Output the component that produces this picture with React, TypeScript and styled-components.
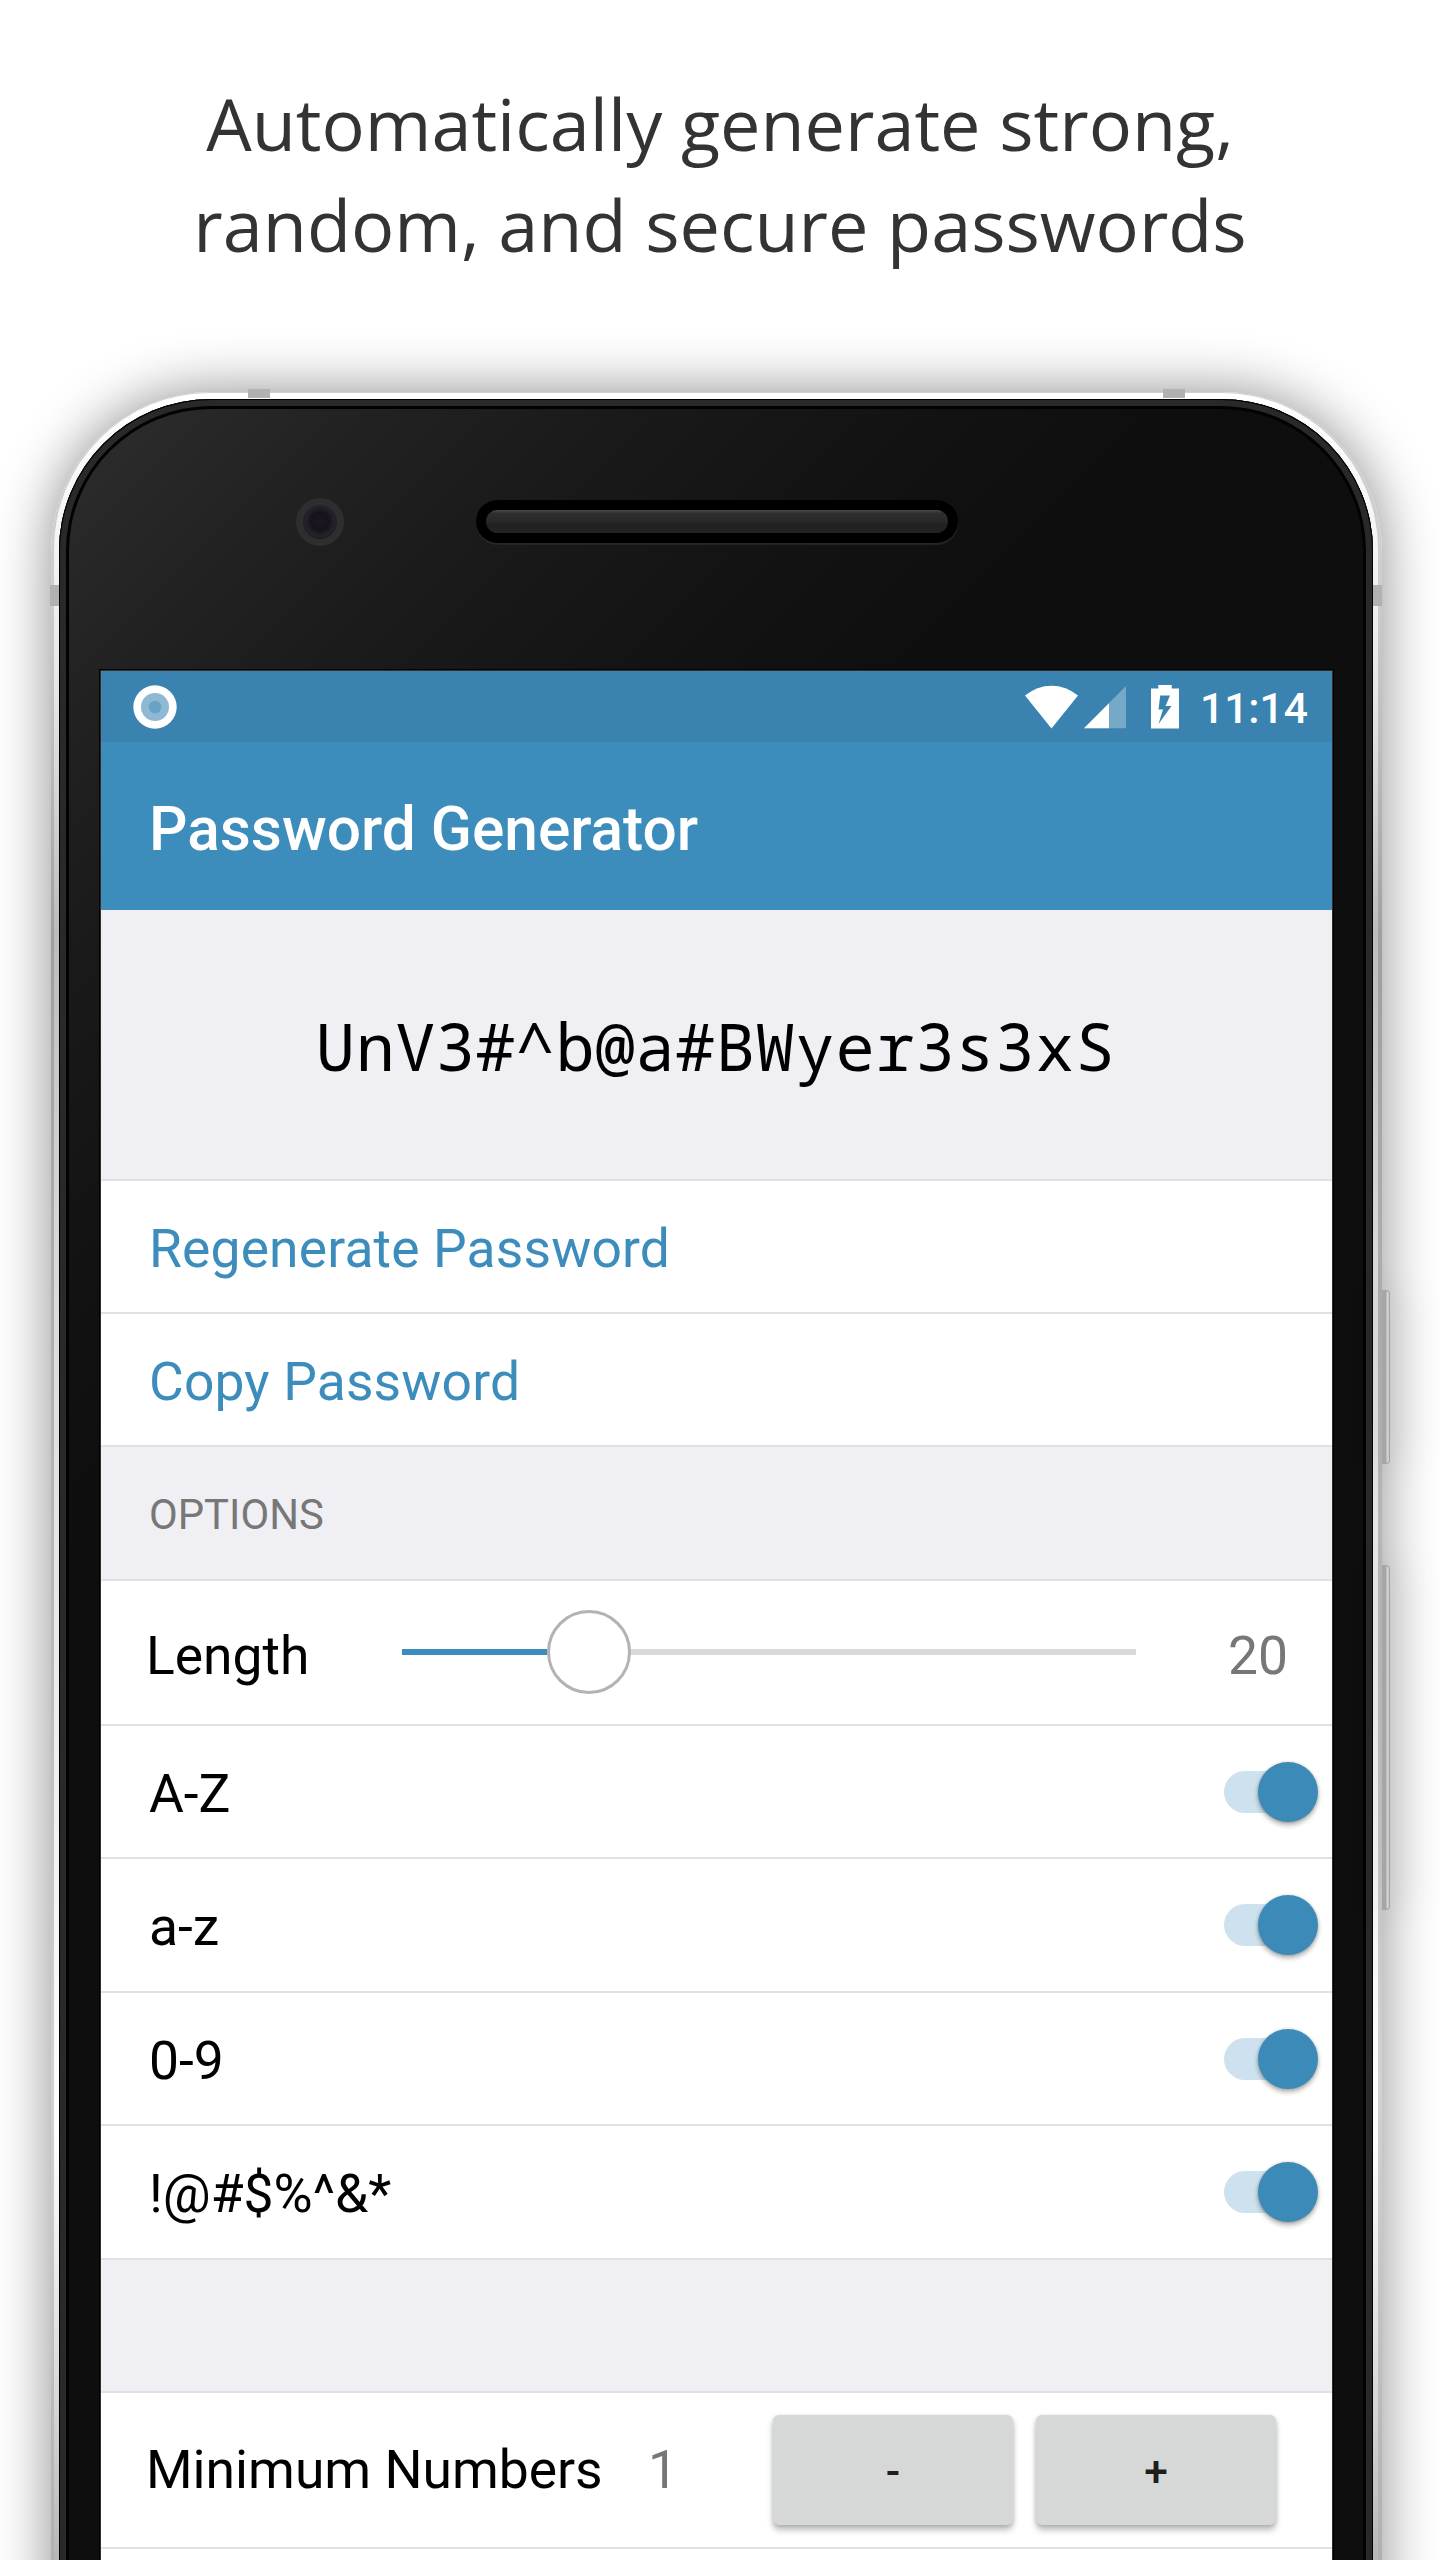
import React from "react";
import styled, { createGlobalStyle } from "styled-components";

const GlobalStyle = createGlobalStyle`
  * { box-sizing: border-box; }
  html, body { margin: 0; padding: 0; background: #fff; }
  body { height: 2560px; overflow: hidden; }
`;

const blue = "#3c8dbc";
const line = "#e0e0e7";

const Page = styled.main`
  width: 1440px;
  height: 2560px;
  overflow: hidden;
  background: #fff;
  display: flex;
  flex-direction: column;
  font-family: Roboto, "Liberation Sans", sans-serif;
`;

const Caption = styled.h1`
  flex: none;
  margin: 0;
  height: 392px;
  padding-top: 73px;
  text-align: center;
  font: 400 72px/101px "Open Sans", "Noto Sans", sans-serif;
  color: #333;
  white-space: pre-line;
`;

const Phone = styled.section`
  position: relative;
  flex: none;
  width: 1331px;
  height: 2400px;
  margin-left: 51px;
  padding: 1px 4px 0 3px;
  border-radius: 160px 160px 0 0;
  background: linear-gradient(180deg, #d0d0d0 0, #cdcdcd 190px, #bdbdbd 350px, #9f9f9f 550px, #acacac 850px, #bbb 1300px, #d2d2d2 1700px, #b0b0b0 2160px);
  box-shadow: 0 0 56px rgba(0, 0, 0, 0.45);
`;

const Metal = styled.div`
  height: 100%;
  padding: 6px 5px 0;
  border-radius: 156px 156px 0 0;
  background: linear-gradient(180deg, #fff 0, #f4f4f4 150px, #e6e6e6 300px, #bcbcbc 540px, #d8d8d8 850px, #ececec 1300px, #fff 1740px, #d8d8d8 2000px, #b8b8b8 2160px);
`;

const Body = styled.div`
  height: 100%;
  border-radius: 152px 152px 0 0;
  background: linear-gradient(135deg, #2b2b2b 60px, #222 220px, #1a1a1a 400px, #121212 640px, #0e0e0e 820px);
  box-shadow: inset 0 0 0 1px #000, inset 0 0 0 7px #292929, inset 0 0 0 10px #020202;
`;

const Bezel = styled.div`
  height: 272px;
  padding: 99px 0 0 237px;
  display: flex;
  align-items: flex-start;
  gap: 132px;
`;

const Camera = styled.div`
  width: 48px;
  height: 48px;
  border: 7px solid #2e2e2e;
  border-radius: 50%;
  background: radial-gradient(circle at 50% 48%, #1b1728 0, #151319 35%, #25222a 60%, #141318 90%);
`;

const Speaker = styled.div`
  width: 482px;
  height: 43px;
  margin-top: 2px;
  padding: 10px;
  border-radius: 22px;
  background: #000;
  box-shadow: 0 2px 1px #262626;
`;

const Grille = styled.div`
  height: 23px;
  border-radius: 12px;
  background: linear-gradient(180deg, #4a4a4a 0, #2e2e2e 15%, #292929 50%, #222 56%, #222 100%);
`;

const Antenna = styled.i<{ $x: number; $y: number; $w: number; $h: number }>`
  position: absolute;
  left: ${(p) => p.$x}px;
  top: ${(p) => p.$y}px;
  width: ${(p) => p.$w}px;
  height: ${(p) => p.$h}px;
  background: #b1b1b1;
`;

const SideButton = styled.i<{ $y: number; $h: number }>`
  position: absolute;
  left: 1331px;
  top: ${(p) => p.$y}px;
  width: 8px;
  height: ${(p) => p.$h}px;
  border: 1px solid #a5a5a5;
  border-left: 0;
  border-radius: 0 4px 4px 0;
  background: linear-gradient(90deg, #a6a6a6 0 4px, #d6d6d6 5px, #bdbdbd 8px);
  box-shadow: 10px 0 42px rgba(0, 0, 0, 0.22);
`;

const Screen = styled.div`
  width: 1231px;
  margin-left: 42px;
  background: #fff;
  box-shadow: 0 0 0 1px #33302e, 0 0 0 2px #000;
`;

const StatusBar = styled.div`
  height: 71px;
  padding: 0 24px 0 32px;
  display: flex;
  align-items: center;
  background: #3a83b0;
  color: #fff;
`;

const Clock = styled.time`
  font-size: 42.6px;
  font-weight: 500;
  line-height: 71px;
  padding-top: 4px;
`;

const StatusIcon = styled.svg<{ $gap: number }>`
  display: block;
  flex: none;
  margin-right: ${(p) => p.$gap}px;
`;

const Spacer = styled.span`
  flex: 1;
`;

const Toolbar = styled.header`
  height: 168px;
  padding: 6px 0 0 48px;
  display: flex;
  align-items: center;
  background: ${blue};
  color: #fff;
  font-size: 60.4px;
  font-weight: 500;
`;

const Password = styled.output`
  height: 269px;
  padding: 1px 2px 0 0;
  display: flex;
  align-items: center;
  justify-content: center;
  background: #efeff4;
  color: #000;
  font-family: "Noto Sans Mono", "DejaVu Sans Mono", monospace;
  font-size: 65.3px;
  letter-spacing: 0.8px;
`;

const Row = styled.div<{ $h: number; $gray?: boolean }>`
  height: ${(p) => p.$h}px;
  padding: 3px 14px 0 48px;
  border-top: 2px solid ${line};
  display: flex;
  align-items: center;
  background: ${(p) => (p.$gray ? "#efeff4" : "#fff")};
  color: #000;
  font-size: 53.4px;
  white-space: nowrap;
`;

const Action = styled.span`
  color: ${blue};
  letter-spacing: 0.15px;
`;

const SectionTitle = styled.h2`
  margin: 0;
  font-size: 41.8px;
  font-weight: 400;
  color: #777;
`;

const ControlRow = styled(Row)<{ $top: number }>`
  padding: ${(p) => p.$top}px 44px 0 45px;
`;

const Label = styled.label<{ $w: number; $lift?: number }>`
  width: ${(p) => p.$w}px;
  margin-top: ${(p) => -(p.$lift ?? 0)}px;
`;

const Value = styled.span<{ $lift?: number }>`
  margin-top: ${(p) => -(p.$lift ?? 0)}px;
  color: #777;
`;

const Track = styled.div`
  width: 734px;
  height: 6px;
  margin: -7px auto 0 0;
  display: flex;
  align-items: center;
  background: #dadada;
`;

const Fill = styled.div`
  width: 145px;
  height: 6px;
  background: ${blue};
`;

const Knob = styled.div`
  flex: none;
  width: 84px;
  height: 84px;
  border: 3px solid #b3b3b3;
  border-radius: 50%;
  background: #fff;
`;

const Switch = styled.div`
  width: 94px;
  height: 42px;
  margin: -3px 0 0 auto;
  border-radius: 21px;
  display: flex;
  align-items: center;
  justify-content: flex-end;
  background: linear-gradient(90deg, #cde1ee 0 60px, transparent 60px);
`;

const Thumb = styled.div`
  flex: none;
  width: 60px;
  height: 60px;
  border-radius: 50%;
  background: #3c8ab8;
  box-shadow: 0 3px 5px rgba(0, 0, 0, 0.32), 0 0 3px rgba(0, 0, 0, 0.15);
`;

const Steps = styled.div`
  margin: -2px 12px 0 auto;
  display: flex;
  gap: 23px;
`;

const StepButton = styled.button`
  width: 240px;
  height: 110px;
  padding: 4px 0 0;
  border: 0;
  border-radius: 6px;
  background: #d6d8d7;
  color: #1e1e1e;
  font: 500 42.5px Roboto, sans-serif;
  box-shadow: 0 5px 6px rgba(0, 0, 0, 0.26), 0 1px 4px rgba(0, 0, 0, 0.12);
`;

const charsets: [string, number][] = [
  ["A-Z", 133],
  ["a-z", 134],
  ["0-9", 133],
  ["!@#$%^&*", 134],
];

export default function App() {
  return (
    <Page>
      <GlobalStyle />
      <Caption>{"Automatically generate strong,\nrandom, and secure passwords"}</Caption>
      <Phone>
        <Metal>
          <Body>
            <Bezel>
              <Camera />
              <Speaker>
                <Grille />
              </Speaker>
            </Bezel>
            <Screen>
              <StatusBar>
                <StatusIcon $gap={0} width="44" height="44" viewBox="0 0 44 44">
                  <circle cx="22" cy="22" r="21.7" fill="#fff" />
                  <circle cx="22" cy="22" r="14" fill="#8fb8d2" />
                  <circle cx="22" cy="22" r="6.3" fill="#69a3c4" />
                </StatusIcon>
                <Spacer />
                <StatusIcon $gap={6} width="53" height="44" viewBox="0 0 53 44">
                  <path d="M0 10.5Q12 .7 26.5 .7T53 10.5L26.5 43.5Z" fill="#fff" />
                </StatusIcon>
                <StatusIcon $gap={25} width="42" height="44" viewBox="0 0 42 44">
                  <path d="M42 1V43.3H0Z" fill="#76a9c8" />
                  <path d="M25 18.2V43.3H0Z" fill="#fff" />
                </StatusIcon>
                <StatusIcon $gap={21} width="28" height="44" viewBox="0 0 28 44">
                  <path
                    fillRule="evenodd"
                    fill="#fff"
                    d="M7.3 0H20.7V3.5H28V43.5H0V3.5H7.3ZM9.2 10.5L7.5 24.5H12L7.5 39L20.5 21H14.5L19 10.5Z"
                  />
                </StatusIcon>
                <Clock>11:14</Clock>
              </StatusBar>
              <Toolbar>Password Generator</Toolbar>
              <Password>UnV3#^b@a#BWyer3s3xS</Password>
              <Row $h={133}>
                <Action>Regenerate Password</Action>
              </Row>
              <Row $h={133}>
                <Action>Copy Password</Action>
              </Row>
              <Row $h={134} $gray>
                <SectionTitle>OPTIONS</SectionTitle>
              </Row>
              <ControlRow $h={145} $top={5}>
                <Label $w={256}>Length</Label>
                <Track>
                  <Fill />
                  <Knob />
                </Track>
                <Value>20</Value>
              </ControlRow>
              {charsets.map(([name, h]) => (
                <Row key={name} $h={h}>
                  {name}
                  <Switch>
                    <Thumb />
                  </Switch>
                </Row>
              ))}
              <Row $h={133} $gray />
              <ControlRow $h={156} $top={1}>
                <Label $w={502} $lift={2}>Minimum Numbers</Label>
                <Value $lift={2}>1</Value>
                <Steps>
                  <StepButton>-</StepButton>
                  <StepButton>+</StepButton>
                </Steps>
              </ControlRow>
              <Row $h={133} />
            </Screen>
          </Body>
        </Metal>
        <Antenna $x={197} $y={-3} $w={22} $h={9} />
        <Antenna $x={1112} $y={-3} $w={22} $h={9} />
        <Antenna $x={-1} $y={193} $w={9} $h={21} />
        <Antenna $x={1322} $y={193} $w={9} $h={21} />
        <SideButton $y={898} $h={174} />
        <SideButton $y={1173} $h={345} />
      </Phone>
    </Page>
  );
}
